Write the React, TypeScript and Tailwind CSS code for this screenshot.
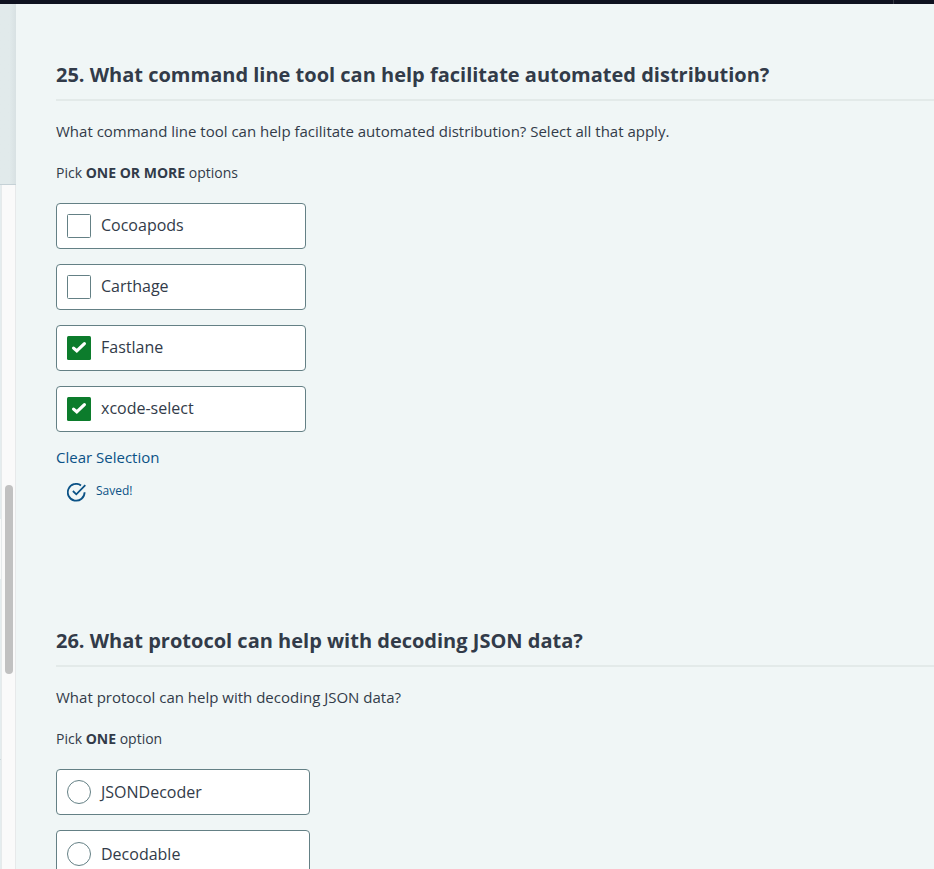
import type { ReactNode } from "react";

function CheckMark() {
  return (
    <svg viewBox="0 0 24 24" className="size-6" fill="none" stroke="#fff" strokeWidth="3.2" strokeLinecap="round">
      <path d="M6.6 12.1 L9.8 14.9 L17.4 7.6" />
    </svg>
  );
}

function SavedIcon() {
  return (
    <svg viewBox="0 0 20 20" className="size-5" fill="none" stroke="#0b5286" strokeWidth="1.8">
      <path d="M14 2.4 A8.4 8.4 0 1 0 17.6 9.2" />
      <path d="M5.9 8 L9.3 11.3 L18.3 2.1" />
    </svg>
  );
}

type OptionProps = { label: string; kind: "checkbox" | "radio"; checked?: boolean; width: string; nudge?: string };

function Option({ label, kind, checked, width, nudge = "pt-0" }: OptionProps) {
  const shape = kind === "radio" ? "rounded-full" : "rounded-[1.5px]";
  const fill = checked ? "bg-[#0c7c2c]" : "border border-[#648085] bg-white";
  const lift = kind === "radio" ? "mt-0" : "-mt-[2px]";
  return (
    <div className={`flex h-[46px] shrink-0 items-center rounded-[4px] border border-[#648085] bg-white pl-[10px] ${width} ${nudge}`}>
      <span className={`flex size-6 shrink-0 items-center justify-center ${shape} ${fill}`}>{checked && <CheckMark />}</span>
      <span className={`ml-[10px] text-[16px] leading-6 ${lift}`}>{label}</span>
    </div>
  );
}

function Question({ title, body, pick, children }: { title: string; body: string; pick: ReactNode; children: ReactNode }) {
  return (
    <section className="h-[566px] shrink-0 pl-10 pt-14">
      <h2 className="h-[41px] border-b-2 border-[#e3eae9] text-[20px] font-bold leading-[30px]">{title}</h2>
      <p className="mt-[18px] text-[15px] leading-6">{body}</p>
      <p className="mt-[18px] text-[14px] leading-6">{pick}</p>
      <div className="mt-[18px] flex flex-col gap-[15px]">{children}</div>
    </section>
  );
}

export default function App() {
  return (
    <div className="flex h-[869px] w-[934px] flex-col overflow-hidden bg-[#f0f6f6] font-['Open_Sans','Noto_Sans',sans-serif] text-[#323b49]">
      <header className="flex h-1 shrink-0 justify-end bg-[#0f1220]">
        <div className="mr-10 w-px bg-[#353842]" />
      </header>
      <div className="flex min-h-0 flex-1">
        <aside className="flex w-4 shrink-0 flex-col">
          <div className="h-[181px] shrink-0 border-b border-[#c5d1d6] bg-linear-to-r from-[#e1eaeb] from-60% to-[#d8e1e3]" />
          <div className="flex flex-1">
            <div className="w-[2px] border-r border-[#e6eaeb] bg-[#e4ecee]">
              <div className="mt-[334px] h-[60px] bg-[#f8fafa]" />
              <div className="mt-[180px] h-px bg-[#ccd6da]" />
            </div>
            <div className="w-[14px] border-r border-[#e7e9ea] bg-[#fafafa] pl-[3px] pt-[300px]">
              <div className="h-[189px] w-2 rounded-full bg-[#c1c1c1]" />
            </div>
          </div>
        </aside>
        <main className="flex min-w-0 flex-1 flex-col overflow-hidden">
          <Question
            title="25. What command line tool can help facilitate automated distribution?"
            body="What command line tool can help facilitate automated distribution? Select all that apply."
            pick={<>Pick <strong>ONE OR MORE</strong> options</>}
          >
            <Option kind="checkbox" label="Cocoapods" width="w-[250px]" />
            <Option kind="checkbox" label="Carthage" width="w-[250px]" />
            <Option kind="checkbox" label="Fastlane" width="w-[250px]" checked />
            <Option kind="checkbox" label="xcode-select" width="w-[250px]" checked />
            <div className="-mt-[2px] text-[#0b5286]">
              <div className="text-[15px] leading-6">Clear Selection</div>
              <div className="mt-[12px] flex h-6 items-center pl-[11px]">
                <SavedIcon />
                <span className="-mt-[4px] ml-[9px] text-[12px] leading-5">Saved!</span>
              </div>
            </div>
          </Question>
          <Question
            title="26. What protocol can help with decoding JSON data?"
            body="What protocol can help with decoding JSON data?"
            pick={<>Pick <strong>ONE</strong> option</>}
          >
            <Option kind="radio" label="JSONDecoder" width="w-[254px]" />
            <Option kind="radio" label="Decodable" width="w-[254px]" nudge="pt-[2px]" />
          </Question>
        </main>
      </div>
    </div>
  );
}
